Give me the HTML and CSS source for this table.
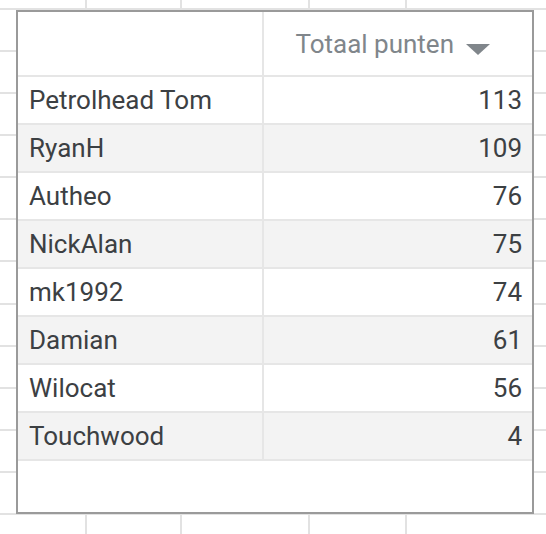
FILE: index.html
```html
<!DOCTYPE html>
<html lang="nl">
<head>
<meta charset="utf-8">
<title>Totaal punten</title>
<link rel="stylesheet" href="styles.css">
</head>
<body>
<div class="sheet">
  <div class="chart">
    <div class="row head">
      <div class="cell name"></div>
      <div class="cell value">
        <span class="label">Totaal punten</span>
        <svg class="sort" width="24" height="11" viewBox="0 0 24 11"><path d="M0 0H24L12 11Z" fill="#80868b"/></svg>
      </div>
    </div>
    <div class="row"><div class="cell name">Petrolhead Tom</div><div class="cell value">113</div></div>
    <div class="row alt"><div class="cell name">RyanH</div><div class="cell value">109</div></div>
    <div class="row"><div class="cell name">Autheo</div><div class="cell value">76</div></div>
    <div class="row alt"><div class="cell name">NickAlan</div><div class="cell value">75</div></div>
    <div class="row"><div class="cell name">mk1992</div><div class="cell value">74</div></div>
    <div class="row alt"><div class="cell name">Damian</div><div class="cell value">61</div></div>
    <div class="row"><div class="cell name">Wilocat</div><div class="cell value">56</div></div>
    <div class="row alt"><div class="cell name">Touchwood</div><div class="cell value">4</div></div>
  </div>
</div>
</body>
</html>
```

FILE: styles.css
```css
html, body {
  margin: 0;
  padding: 0;
}

body {
  width: 546px;
  height: 534px;
  overflow: hidden;
  background-color: #ffffff;
  font-family: Roboto, "Liberation Sans", Arial, sans-serif;
}

.sheet {
  width: 546px;
  height: 534px;
  padding: 10px 0 0 16px;
  box-sizing: border-box;
  background-image:
    linear-gradient(#e2e2e2, #e2e2e2),
    linear-gradient(#e2e2e2, #e2e2e2),
    linear-gradient(#e2e2e2, #e2e2e2),
    linear-gradient(#e2e2e2, #e2e2e2),
    repeating-linear-gradient(to bottom, #e2e2e2 0, #e2e2e2 2px, transparent 2px, transparent 42.08px);
  background-size: 2px 100%, 2px 100%, 2px 100%, 2px 100%, 100% 100%;
  background-position: 85px 0, 180px 0, 308px 0, 405px 0, 0 8px;
  background-repeat: no-repeat, no-repeat, no-repeat, no-repeat, repeat-y;
}

.chart {
  width: 518px;
  height: 504px;
  box-sizing: border-box;
  border: 2px solid #9a9a9a;
  background: #ffffff;
  display: flex;
  flex-direction: column;
}

.row {
  display: flex;
  height: 48px;
  box-sizing: border-box;
  border-bottom: 2px solid #e6e6e6;
  flex: none;
  color: #3c4043;
  font-size: 26px;
}

.row.alt {
  background: #f3f3f3;
}

.row.head {
  height: 65px;
}

.cell {
  display: flex;
  align-items: center;
  box-sizing: border-box;
}

.name {
  width: 246px;
  border-right: 2px solid #e6e6e6;
  padding-left: 11px;
}

.value {
  flex: 1;
  justify-content: flex-end;
  padding-right: 10px;
}

.head .value {
  color: #80868b;
  padding-right: 42px;
  gap: 12px;
}

.sort {
  display: block;
  margin-top: 12px;
}
```
